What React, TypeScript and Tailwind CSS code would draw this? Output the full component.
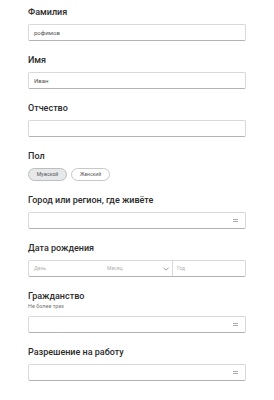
const font = { fontFamily: 'Roboto, "Liberation Sans", sans-serif' };

const inputCls =
  'h-[17px] w-full rounded-[2px] border border-[#d9d9d9] border-b-[#b3b3b3] bg-white flex items-center px-[5px] text-[6px] text-[#555]';

const Menu = () => (
  <span className="ml-auto flex flex-col gap-[1px] mr-[2px]">
    <span className="block h-[1px] w-[5px] bg-[#aaa]" />
    <span className="block h-[1px] w-[5px] bg-[#aaa]" />
  </span>
);

const Label = ({ children }: { children: React.ReactNode }) => (
  <div className="text-[9px] leading-[12px] font-medium text-[#2b2b2b] mb-[6px]">{children}</div>
);

export default function App() {
  return (
    <div className="w-[274px] h-[400px] bg-white px-[28px] pt-[6px] flex flex-col gap-[13px]" style={font}>
      <div>
        <Label>Фамилия</Label>
        <div className={inputCls}>рофимов</div>
      </div>
      <div>
        <Label>Имя</Label>
        <div className={inputCls}>Иван</div>
      </div>
      <div>
        <Label>Отчество</Label>
        <div className={inputCls} />
      </div>
      <div>
        <Label>Пол</Label>
        <div className="flex gap-[4px]">
          <span className="h-[13px] w-[39px] rounded-full border border-[#bdbdbd] bg-[#e6e8ea] text-[5px] text-[#555] flex items-center justify-center">
            Мужской
          </span>
          <span className="h-[13px] w-[39px] rounded-full border border-[#c8c8c8] bg-white text-[5px] text-[#555] flex items-center justify-center">
            Женский
          </span>
        </div>
      </div>
      <div>
        <Label>Город или регион, где живёте</Label>
        <div className={inputCls}>
          <Menu />
        </div>
      </div>
      <div>
        <Label>Дата рождения</Label>
        <div className="h-[17px] w-full rounded-[2px] border border-[#d9d9d9] border-b-[#b3b3b3] flex text-[5px] text-[#b0b0b0]">
          <div className="flex-1 flex items-center pl-[5px] pr-[3px]">
            <span>День</span>
            <span className="ml-[61px]">Месяц</span>
            <svg className="ml-auto" width="6" height="4" viewBox="0 0 6 4">
              <path d="M0.5 0.8 L3 3.2 L5.5 0.8" fill="none" stroke="#888" strokeWidth="0.8" />
            </svg>
          </div>
          <div className="w-[73px] border-l border-[#d9d9d9] flex items-center px-[4px]">Год</div>
        </div>
      </div>
      <div>
        <div className="text-[9px] leading-[12px] font-medium text-[#2b2b2b]">Гражданство</div>
        <div className="text-[5.5px] leading-[8px] text-[#777] mb-[6px]">Не более трех</div>
        <div className={inputCls}>
          <Menu />
        </div>
      </div>
      <div>
        <Label>Разрешение на работу</Label>
        <div className={inputCls}>
          <Menu />
        </div>
      </div>
    </div>
  );
}
